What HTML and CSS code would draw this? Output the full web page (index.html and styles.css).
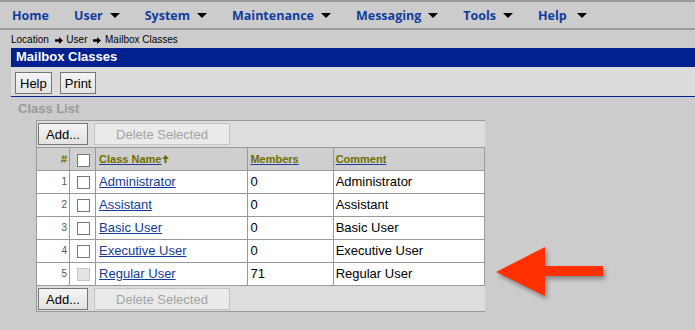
FILE: index.html
```html
<!DOCTYPE html>
<html lang="en">
    <head>
        <meta charset="utf-8">
        <title>Mailbox Classes</title>
        <link rel="stylesheet" href="styles.css">
    </head>
    <body>
        <div class="menubar">
            <span class="menu">Home</span>
            <span class="menu drop">User</span>
            <span class="menu drop">System</span>
            <span class="menu drop">Maintenance</span>
            <span class="menu drop">Messaging</span>
            <span class="menu drop">Tools</span>
            <span class="menu drop help">Help</span>
        </div>

        <div class="page">
            <div class="location">
                Location
                <svg class="crumb" width="8" height="7" viewBox="0 0 8 7"><path d="M0 2.2H4V0L8 3.5L4 7V4.8H0Z"/></svg>
                User
                <svg class="crumb" width="8" height="7" viewBox="0 0 8 7"><path d="M0 2.2H4V0L8 3.5L4 7V4.8H0Z"/></svg>
                Mailbox Classes
            </div>
            <div class="titlebar">Mailbox Classes</div>
            <div class="toolbar">
                <button type="button" class="btn">Help</button>
                <button type="button" class="btn">Print</button>
            </div>

            <div class="section-title">Class List</div>
            <div class="listbox">
                <div class="listbar">
                    <button type="button" class="btn add">Add...</button>
                    <button type="button" class="btn delete" disabled>Delete Selected</button>
                </div>
                <table class="grid">
                    <thead>
                        <tr>
                            <th class="num">#</th>
                            <th class="check"><input type="checkbox"></th>
                            <th class="name"><a href="#">Class Name</a><svg class="sort" width="7" height="8" viewBox="0 0 7 8"><path d="M3.5 0L7 4H4.5V8H2.5V4H0Z"/></svg></th>
                            <th class="members"><a href="#">Members</a></th>
                            <th class="comment"><a href="#">Comment</a></th>
                        </tr>
                    </thead>
                    <tbody>
                        <tr>
                            <td class="num">1</td>
                            <td class="check"><input type="checkbox"></td>
                            <td><a href="#">Administrator</a></td>
                            <td>0</td>
                            <td>Administrator</td>
                        </tr>
                        <tr>
                            <td class="num">2</td>
                            <td class="check"><input type="checkbox"></td>
                            <td><a href="#">Assistant</a></td>
                            <td>0</td>
                            <td>Assistant</td>
                        </tr>
                        <tr>
                            <td class="num">3</td>
                            <td class="check"><input type="checkbox"></td>
                            <td><a href="#">Basic User</a></td>
                            <td>0</td>
                            <td>Basic User</td>
                        </tr>
                        <tr>
                            <td class="num">4</td>
                            <td class="check"><input type="checkbox"></td>
                            <td><a href="#">Executive User</a></td>
                            <td>0</td>
                            <td>Executive User</td>
                        </tr>
                        <tr>
                            <td class="num">5</td>
                            <td class="check"><input type="checkbox" disabled></td>
                            <td><a href="#">Regular User</a></td>
                            <td>71</td>
                            <td>Regular User</td>
                        </tr>
                    </tbody>
                </table>
                <div class="listbar bottom">
                    <button type="button" class="btn add">Add...</button>
                    <button type="button" class="btn delete" disabled>Delete Selected</button>
                </div>
            </div>
        </div>

        <svg class="callout" width="125" height="70" viewBox="0 0 125 70">
            <path d="M6 32L55 7V26H113V36H55V56Z"/>
        </svg>
    </body>
</html>
```

FILE: styles.css
```css
body {
    margin: 0;
    position: relative;
    height: 330px;
    overflow: hidden;
    background-color: #cccccc;
    font-family: "Liberation Sans", Arial, sans-serif;
    font-size: 13px;
    color: #000;
}

.menubar {
    display: flex;
    align-items: center;
    gap: 25px;
    height: 26px;
    padding-left: 12px;
    border-top: 2px solid #9c9c9c;
    border-bottom: 2px solid #9c9c9c;
    font-family: "Open Sans", sans-serif;
    font-weight: bold;
    font-size: 12.5px;
    color: #103c9c;
}

.menu.drop::after {
    content: "";
    display: inline-block;
    margin-left: 7px;
    vertical-align: 2px;
    border-left: 5px solid transparent;
    border-right: 5px solid transparent;
    border-top: 5px solid #000;
}

.menu.help::after {
    margin-left: 10px;
}

.page {
    padding-left: 11px;
}

.location {
    height: 18px;
    line-height: 20px;
    font-size: 10px;
    color: #000;
}

.location .crumb {
    margin: 0 1px 0 3px;
    vertical-align: -0.5px;
}

.titlebar {
    height: 17px;
    padding: 0 0 2px 5px;
    line-height: 17px;
    background-color: #00218f;
    color: #fff;
    font-weight: bold;
}

.toolbar {
    display: flex;
    gap: 8px;
    height: 24px;
    padding: 5px 0 0 4px;
    background-color: #dcdcdc;
    border-bottom: 1px solid #00218f;
}

.btn {
    height: 22px;
    padding: 0 4px;
    margin: 0;
    border: 1px solid #767676;
    border-radius: 0;
    background: linear-gradient(#f4f4f4, #e2e2e2);
    font-family: "Liberation Sans", Arial, sans-serif;
    font-size: 13px;
    color: #000;
}

.btn.add {
    width: 50px;
}

.btn.delete {
    width: 136px;
    border-color: #c2c2c2;
    background: #eaeaea;
    color: #a3a3a3;
}

.section-title {
    height: 23px;
    line-height: 23px;
    padding-left: 7px;
    font-weight: bold;
    color: #9a9a9a;
}

.listbox {
    width: 448px;
    margin-left: 25px;
    background-color: #dddddd;
    border-top: 1px solid #999;
    border-left: 1px solid #999;
    border-bottom: 1px solid #999;
}

.listbar {
    display: flex;
    gap: 6px;
    padding: 2px 1px;
}

.listbar.bottom {
    padding-bottom: 1px;
}

.grid {
    width: 448px;
    table-layout: fixed;
    border-spacing: 0;
    border-top: 1px solid #999;
}

.grid th,
.grid td {
    height: 22px;
    padding: 0 2px;
    line-height: 22px;
    border-right: 1px solid #999;
    border-bottom: 1px solid #999;
    text-align: left;
    white-space: nowrap;
    background-color: #fff;
}

.grid th {
    background-color: #cfcfcf;
    font-size: 11px;
    font-weight: bold;
}

.grid th a {
    color: #6e6e00;
    text-decoration-color: #1b3f9c;
}

.grid td a {
    color: #133c99;
}

.grid .sort {
    margin-left: 1px;
    vertical-align: 0;
    fill: #6e6e00;
}

.grid .num {
    width: 30px;
    padding: 0 2px 0 0;
    text-align: right;
    font-size: 10px;
    color: #555;
}

.grid th.num {
    font-size: 11px;
    color: #6e6e00;
}

.grid .check {
    width: 25px;
    padding: 0;
    text-align: center;
}

.grid th:nth-child(3) {
    width: 146px;
    padding-left: 3px;
}

.grid td:nth-child(3) {
    padding-left: 3px;
}

.grid th:nth-child(4) {
    width: 80px;
}

.grid th:nth-child(5) {
    width: 146px;
}

.grid input[type="checkbox"] {
    appearance: none;
    width: 13px;
    height: 13px;
    margin: 0 0 0 1px;
    vertical-align: middle;
    border: 1px solid #777;
    background-color: #fff;
}

.grid input[type="checkbox"]:disabled {
    border-color: #c6c6c6;
    background-color: #e4e4e4;
}

/* annotation arrow drawn over the page */
.callout {
    position: absolute;
    left: 490px;
    top: 240px;
    fill: #ff3000;
    filter: drop-shadow(2px 3px 2px rgba(0, 0, 0, 0.35));
}
```
